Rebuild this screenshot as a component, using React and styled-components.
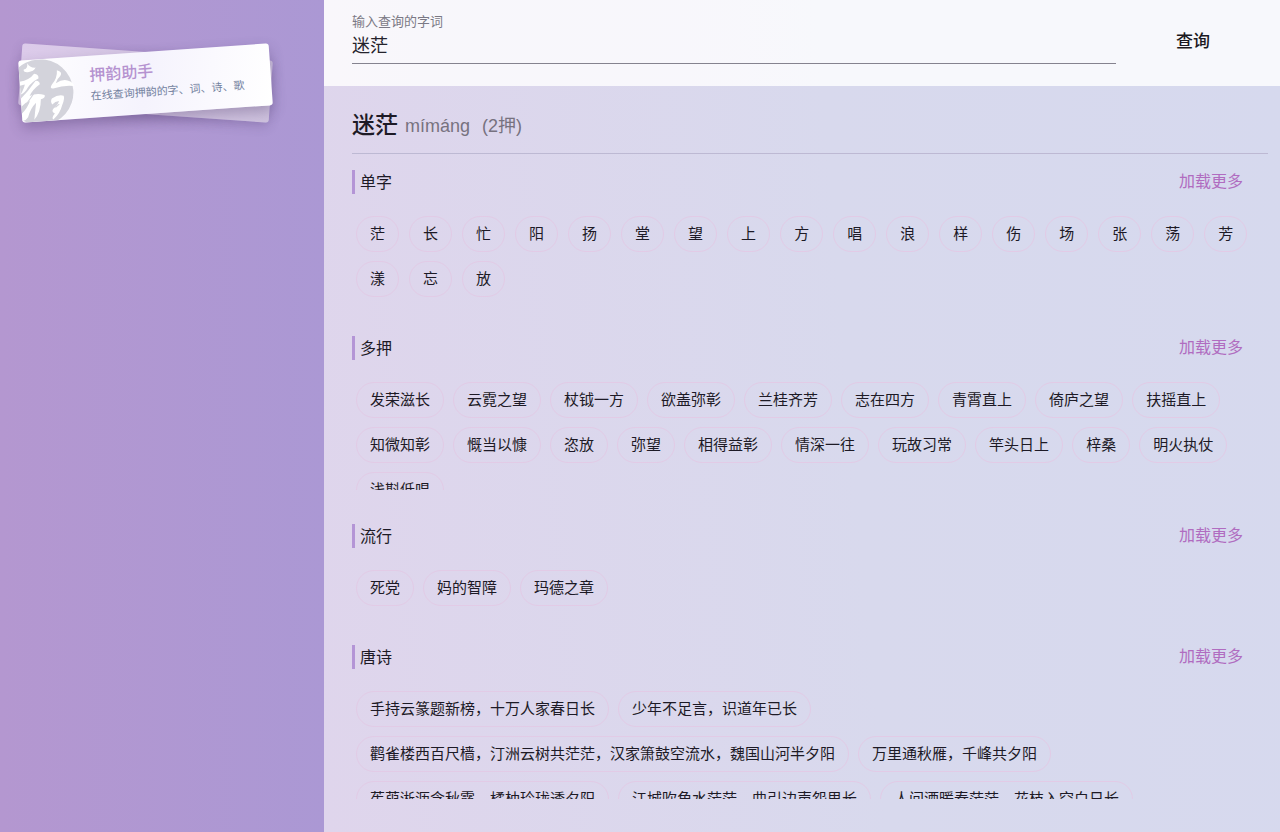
import styled, { createGlobalStyle } from "styled-components";

const GlobalStyle = createGlobalStyle`
  * {
    box-sizing: border-box;
  }

  body {
    margin: 0;
    font-family: "Liberation Sans", "Noto Sans CJK SC", sans-serif;
    color: #1d1a26;
  }

  h1, h2, p, ul {
    margin: 0;
    padding: 0;
    font-weight: 400;
  }

  button, input {
    font-family: inherit;
  }
`;

const sections = [
  {
    title: "单字",
    gap: 10,
    words: "茫 长 忙 阳 扬 堂 望 上 方 唱 浪 样 伤 场 张 荡 芳 漾 忘 放".split(" "),
  },
  {
    title: "多押",
    gap: 9,
    words:
      "发荣滋长 云霓之望 杖钺一方 欲盖弥彰 兰桂齐芳 志在四方 青霄直上 倚庐之望 扶摇直上 知微知彰 慨当以慷 恣放 弥望 相得益彰 情深一往 玩故习常 竿头日上 梓桑 明火执仗 浅斟低唱".split(
        " "
      ),
  },
  {
    title: "流行",
    gap: 9,
    words: ["死党", "妈的智障", "玛德之章"],
  },
  {
    title: "唐诗",
    gap: 9,
    words: [
      "手持云篆题新榜，十万人家春日长",
      "少年不足言，识道年已长",
      "鹳雀楼西百尺樯，汀洲云树共茫茫，汉家箫鼓空流水，魏国山河半夕阳",
      "万里通秋雁，千峰共夕阳",
      "茱萸淅沥含秋露，橘柚玲珑透夕阳",
      "江城吹角水茫茫，曲引边声怨思长",
      "人间酒暖春茫茫，花枝入空白日长",
    ],
  },
];

export default function App() {
  return (
    <Page>
      <GlobalStyle />
      <Sidebar>
        <Brand>
          <BackCard />
          <FrontCard>
            <LogoMark />
            <div>
              <BrandTitle>押韵助手</BrandTitle>
              <BrandText>在线查询押韵的字、词、诗、歌</BrandText>
            </div>
          </FrontCard>
        </Brand>
      </Sidebar>

      <Main>
        <SearchBar onSubmit={(e) => e.preventDefault()}>
          <Field>
            <label htmlFor="word">输入查询的字词</label>
            <input id="word" type="text" defaultValue="迷茫" />
          </Field>
          <SearchButton type="submit">查询</SearchButton>
        </SearchBar>

        <Results>
          <ResultHead>
            <h1>迷茫</h1>
            <p>
              mímáng<span>(2押)</span>
            </p>
          </ResultHead>
          {sections.map((s) => (
            <Section key={s.title}>
              <SectionHead>
                <h2>{s.title}</h2>
                <MoreButton type="button">加载更多</MoreButton>
              </SectionHead>
              <WordList $gap={s.gap}>
                {s.words.map((w) => (
                  <Word key={w}>{w}</Word>
                ))}
              </WordList>
            </Section>
          ))}
        </Results>
      </Main>
    </Page>
  );
}

// brush mark on a grey disc, cut off by the card edge
const LogoMark = () => (
  <LogoSvg viewBox="0 0 60 62" aria-hidden="true">
    <circle cx="20" cy="33" r="33" fill="#d3d3db" />
    <g fill="#fff">
      <path d="M9 3 Q11 8 17 8 Q15 12 9 12 Q4 12 5 9 Q9 9 9 3Z" />
      <path d="M0 21 Q10 20 15 14 Q20 15 19 19 Q12 22 8 27 Q5 32 0 34 Q4 28 5 24 L0 25Z" />
      <path d="M16 21 Q20 21 20 25 Q12 30 9 36 Q16 33 24 36 Q25 39 20 40 Q19 53 12 60 Q13 54 15 43 Q9 48 6 57 Q3 61 0 60 V53 Q6 48 9 41 Q4 42 0 46 V38 Q8 31 16 21Z" />
      <path d="M38 12 Q44 14 41 18 Q37 21 36 25 Q43 21 48 23 Q54 25 54 29 Q45 27 33 30 Q29 30 32 26 Q38 20 38 12Z" />
      <path d="M31 40 Q38 36 43 38 Q44 41 41 47 Q38 56 31 61 Q29 59 33 55 Q29 53 32 50 Q36 48 38 43 Q34 43 31 46 Q29 43 31 40Z" />
    </g>
    <path d="M5 44 L14 33 M34 49 L38 46" fill="none" stroke="#d3d3db" />
  </LogoSvg>
);

const Page = styled.div`
  display: flex;
  min-height: 100vh;
`;

const Sidebar = styled.aside`
  flex: 0 0 324px;
  padding: 52px 53px 52px 20px;
  background: linear-gradient(90deg, #b497d0, #ab98d4);
`;

const Brand = styled.div`
  position: relative;
  height: 62px;
`;

const BackCard = styled.div`
  position: absolute;
  inset: 0;
  border-radius: 3px;
  background: linear-gradient(90deg, #dccbea, #cfc3df);
  box-shadow: 0 4px 12px rgba(60, 40, 90, 0.2);
  transform: rotate(4deg);
`;

const FrontCard = styled.div`
  position: relative;
  display: flex;
  gap: 10px;
  height: 100%;
  overflow: hidden;
  border-radius: 3px;
  background: linear-gradient(100deg, #fff, #f5f3fd 50%, #fff);
  box-shadow: 0 6px 14px rgba(60, 40, 90, 0.3);
  transform: rotate(-4deg);
`;

const LogoSvg = styled.svg`
  flex: none;
  width: 60px;
  height: 62px;
`;

const BrandTitle = styled.p`
  padding-top: 8px;
  font-size: 16px;
  line-height: 24px;
  font-weight: 500;
  color: #b592d0;
`;

const BrandText = styled.p`
  font-size: 11px;
  line-height: 16px;
  white-space: nowrap;
  color: #74829f;
`;

const Main = styled.main`
  flex: 1;
  min-width: 0;
  background: linear-gradient(85deg, #dfd5ec, #d8d9ed 55%, #d6d9ee);
`;

const SearchBar = styled.form`
  display: flex;
  align-items: center;
  height: 86px;
  padding: 0 54px 0 28px;
  background: rgba(255, 255, 255, 0.8);
`;

const Field = styled.div`
  flex: 1;
  display: flex;
  flex-direction: column;
  height: 64px;
  margin-bottom: 22px;
  padding-top: 13px;
  border-bottom: 1px solid #85838f;

  label {
    font-size: 13px;
    line-height: 18px;
    color: #7b7985;
  }

  input {
    width: 100%;
    height: 26px;
    padding: 0;
    border: 0;
    outline: none;
    background: none;
    font-size: 18px;
    color: #25232c;
  }
`;

const SearchButton = styled.button`
  width: 66px;
  height: 36px;
  margin: 0 0 8px 44px;
  padding: 0;
  border: 0;
  background: none;
  font-size: 17px;
  font-weight: 500;
  color: #1b1922;
`;

const Results = styled.div`
  padding: 0 12px 0 28px;
`;

const ResultHead = styled.header`
  display: flex;
  align-items: center;
  gap: 7px;
  height: 68px;
  padding-top: 10px;
  border-bottom: 1px solid #bdb9d3;

  h1 {
    font-size: 23px;
    line-height: 36px;
    font-weight: 500;
  }

  p {
    padding-top: 2px;
    font-size: 18px;
    line-height: 32px;
    color: #77727f;
  }

  span {
    margin-left: 12px;
  }
`;

const Section = styled.section`
  padding: 0 22px 34px 0;

  ${ResultHead} + & {
    padding-top: 16px;
  }
`;

const SectionHead = styled.div`
  display: flex;
  justify-content: space-between;
  height: 24px;
  margin-bottom: 18px;

  h2 {
    padding-left: 5px;
    border-left: 3px solid #b495d6;
    font-size: 16px;
    line-height: 26px;
  }
`;

const MoreButton = styled.button`
  padding: 0 3px;
  border: 0;
  background: none;
  font-size: 16px;
  line-height: 22px;
  color: #b06cc0;
`;

const WordList = styled.ul`
  display: flex;
  flex-wrap: wrap;
  gap: 9px ${(props) => props.$gap}px;
  max-height: 112px;
  padding: 4px 0 5px 4px;
  margin-right: -14px;
  overflow: hidden;
  list-style: none;
`;

const Word = styled.li`
  height: 36px;
  padding: 0 13px;
  border: 1px solid #e2cbe6;
  border-radius: 18px;
  font-size: 15px;
  line-height: 34px;
  white-space: nowrap;
`;
